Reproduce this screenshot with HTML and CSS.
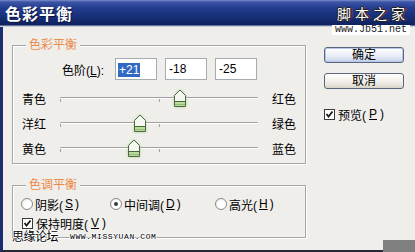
FILE: index.html
```html
<!DOCTYPE html>
<html>
<head>
<meta charset="utf-8">
<link rel="stylesheet" href="styles.css">
</head>
<body>
<div class="win">
  <div class="titlebar"><span class="title">色彩平衡</span></div>
  <div class="main">
    <div class="left">
      <div class="group g1">
        <span class="legend">色彩平衡</span>
        <div class="levels">
          <span class="lvl-label">色阶(<u>L</u>):</span>
          <span class="num"><span class="sel">+21</span></span>
          <span class="num">-18</span>
          <span class="num">-25</span>
        </div>
        <div class="rows">
          <div class="srow">
            <span class="sl">青色</span>
            <div class="track"><i class="tick t0"></i><i class="tick tm"></i>
              <span class="thumb" style="left:114px"><svg width="12" height="18" viewBox="0 0 12 18"><path d="M0.5 6.5L6 1L11.5 6.5V17.5H0.5Z" fill="#f4f7f0" stroke="#55624f"/><rect x="1" y="12" width="10" height="5" fill="#b9dc9c"/><path d="M1 12.5H11" stroke="#3f6b33"/><path d="M1 15.5H11" stroke="#8fc070"/></svg></span>
            </div>
            <span class="sr">红色</span>
          </div>
          <div class="srow">
            <span class="sl">洋红</span>
            <div class="track"><i class="tick t0"></i><i class="tick tm"></i>
              <span class="thumb" style="left:74px"><svg width="12" height="18" viewBox="0 0 12 18"><path d="M0.5 6.5L6 1L11.5 6.5V17.5H0.5Z" fill="#f4f7f0" stroke="#55624f"/><rect x="1" y="12" width="10" height="5" fill="#b9dc9c"/><path d="M1 12.5H11" stroke="#3f6b33"/><path d="M1 15.5H11" stroke="#8fc070"/></svg></span>
            </div>
            <span class="sr">绿色</span>
          </div>
          <div class="srow">
            <span class="sl">黄色</span>
            <div class="track"><i class="tick t0"></i><i class="tick tm"></i>
              <span class="thumb" style="left:68px"><svg width="12" height="18" viewBox="0 0 12 18"><path d="M0.5 6.5L6 1L11.5 6.5V17.5H0.5Z" fill="#f4f7f0" stroke="#55624f"/><rect x="1" y="12" width="10" height="5" fill="#b9dc9c"/><path d="M1 12.5H11" stroke="#3f6b33"/><path d="M1 15.5H11" stroke="#8fc070"/></svg></span>
            </div>
            <span class="sr">蓝色</span>
          </div>
        </div>
      </div>
      <div class="group g2">
        <span class="legend">色调平衡</span>
        <div class="radios">
          <span class="radio r1"><span class="rb"></span>阴影(<u>S</u>)</span>
          <span class="radio r2"><span class="rb on"></span>中间调(<u>D</u>)</span>
          <span class="radio"><span class="rb"></span>高光(<u>H</u>)</span>
        </div>
        <span class="check keep"><span class="cb"><svg width="9" height="9" viewBox="0 0 9 9"><path d="M1.5 4L3.5 6.5L7.5 1.5" fill="none" stroke="#1a1a1a" stroke-width="1.8"/></svg></span>保持明度(<u>V</u>)</span>
      </div>
    </div>
    <div class="right">
      <div class="btn def">确定</div>
      <div class="btn">取消</div>
      <span class="check pv"><span class="cb"><svg width="9" height="9" viewBox="0 0 9 9"><path d="M1.5 4L3.5 6.5L7.5 1.5" fill="none" stroke="#1a1a1a" stroke-width="1.8"/></svg></span>预览(<u>P</u>)</span>
    </div>
  </div>
  <div class="wm-top">脚本之家</div>
  <div class="wm-url">www.Jb51.net</div>
  <div class="wm-bottom">思缘论坛<span class="wm-site">www.missyuan.com</span></div>
  <div class="corner"></div>
</div>
</body>
</html>
```
FILE: styles.css
```css
body { margin: 0; }
.win {
  position: relative;
  width: 415px;
  height: 252px;
  background: #efeeeb;
  font-family: "Liberation Sans", "Noto Sans CJK SC", sans-serif;
  font-size: 12px;
  color: #000;
  overflow: hidden;
}
.titlebar {
  height: 27px;
  box-sizing: border-box;
  padding: 4px 0 0 5px;
  background: linear-gradient(#7c8ecb 0, #3b54a6 2px, #233c8e 8px, #18307a 16px, #0f225e 25px, #b8c0d8 26px, #dfe0e8 27px);
}
.title {
  color: #fff;
  font-family: "Noto Sans CJK SC", sans-serif;
  font-weight: 700;
  font-size: 16px;
  letter-spacing: 1px;
  line-height: 19px;
  text-shadow: 1px 1px 0 #0a1440;
}
.main {
  display: flex;
  height: 225px;
  box-sizing: border-box;
  border-left: 3px solid #1b2d70;
  border-bottom: 2px solid #262a38;
  padding: 18px 0 0 9px;
}
.left {
  display: flex;
  flex-direction: column;
  gap: 21px;
  width: 294px;
}
.group {
  position: relative;
  box-sizing: border-box;
  border: 1px solid #a6a6a6;
  box-shadow: inset 1px 1px 0 #fff, 1px 1px 0 #fff;
}
.g1 { height: 119px; padding: 12px 0 0 9px; }
.g2 { height: 53px; padding: 10px 0 0 8px; }
.legend {
  position: absolute;
  left: 13px;
  top: -8px;
  padding: 0 3px;
  background: #efeeeb;
  color: #ec8a48;
  line-height: 15px;
}
.levels {
  display: flex;
  align-items: center;
  gap: 8px;
  height: 22px;
  margin-left: 40px;
}
.lvl-label { width: 45px; white-space: nowrap; }
.num {
  width: 42px;
  height: 22px;
  box-sizing: border-box;
  border: 1px solid #a5acb2;
  background: #fff;
  font-size: 12px;
  line-height: 20px;
  padding-left: 3px;
}
.sel {
  display: inline-block;
  background: #316ac5;
  color: #fff;
  line-height: 14px;
  padding: 0 1px;
  margin-left: -1px;
  vertical-align: middle;
}
.rows { margin-top: 6px; }
.srow { display: flex; align-items: center; height: 25px; }
.sl { width: 38px; }
.sr { margin-left: 14px; }
.track { position: relative; width: 198px; height: 25px; }
.track::before {
  content: "";
  position: absolute;
  left: 0; right: 0; top: 11px;
  height: 1px;
  background: #a2a2a2;
  border-bottom: 1px solid #fff;
  border-radius: 1px;
}
.tick {
  position: absolute;
  top: 13px;
  width: 1px;
  height: 3px;
  background: #a2a2a2;
}
.t0 { left: 0; }
.tm { left: 99px; }
.thumb {
  position: absolute;
  top: 3px;
  width: 12px;
  height: 18px;
  filter: drop-shadow(0 0 1.5px #a9dc8e);
}
.thumb svg { display: block; }
.radios { display: flex; align-items: center; height: 16px; }
.radio { display: flex; align-items: center; gap: 2px; }
.r1 { width: 89px; }
.r2 { width: 105px; }
.rb {
  width: 12px;
  height: 12px;
  box-sizing: border-box;
  border: 1px solid #8a8a8a;
  border-radius: 50%;
  background: radial-gradient(circle at 60% 60%, #fff 40%, #e2e2e2 100%);
  position: relative;
}
.rb.on::after {
  content: "";
  position: absolute;
  left: 3px; top: 3px;
  width: 4px; height: 4px;
  border-radius: 50%;
  background: #3a3a3a;
}
.check { display: flex; align-items: center; gap: 3px; height: 16px; }
.keep { margin: 3px 0 0 1px; }
.cb {
  width: 11px;
  height: 11px;
  box-sizing: border-box;
  border: 1px solid #3a3a3a;
  background: #fff;
  display: flex;
  align-items: center;
  justify-content: center;
}
.cb svg { display: block; }
.right { margin-left: 18px; padding-top: 2px; }
.btn {
  width: 80px;
  height: 16px;
  box-sizing: border-box;
  border: 1px solid #59667e;
  border-radius: 3px;
  background: linear-gradient(#ffffff, #ece9e2 70%, #d9d4c8);
  text-align: center;
  line-height: 14px;
}
.btn.def {
  background: linear-gradient(#ffffff, #e6ebf6 60%, #c4cfe8);
  box-shadow: inset 0 0 0 1px #b8c8ec;
}
.btn + .btn { margin-top: 10px; }
.pv { margin-top: 17px; }
.wm-top {
  position: absolute;
  left: 337px;
  top: 5px;
  color: #fff;
  font-family: "Noto Sans CJK SC", sans-serif;
  font-size: 14px;
  letter-spacing: 4px;
  line-height: 16px;
  text-shadow: -1px 0 #222, 1px 0 #222, 0 -1px #222, 0 1px #222, 2px 0 #a03030;
}
.wm-url {
  position: absolute;
  left: 332px;
  top: 25px;
  width: 78px;
  background: #fff;
  color: #222;
  font-family: "Liberation Mono", monospace;
  font-size: 10px;
  line-height: 10px;
  text-align: center;
}
.wm-bottom {
  position: absolute;
  left: 12px;
  top: 230px;
  font-size: 12px;
  letter-spacing: -0.5px;
  line-height: 14px;
  text-shadow: 1px 0 #fff, -1px 0 #fff, 0 1px #fff, 0 -1px #fff;
  display: flex;
  align-items: center;
}
.wm-site {
  margin-left: 12px;
  font-family: "Liberation Mono", monospace;
  font-size: 8px;
  letter-spacing: 0.6px;
  text-transform: uppercase;
}
.corner {
  position: absolute;
  right: 0;
  bottom: 0;
  width: 32px;
  height: 12px;
  background: #808080;
}
```
